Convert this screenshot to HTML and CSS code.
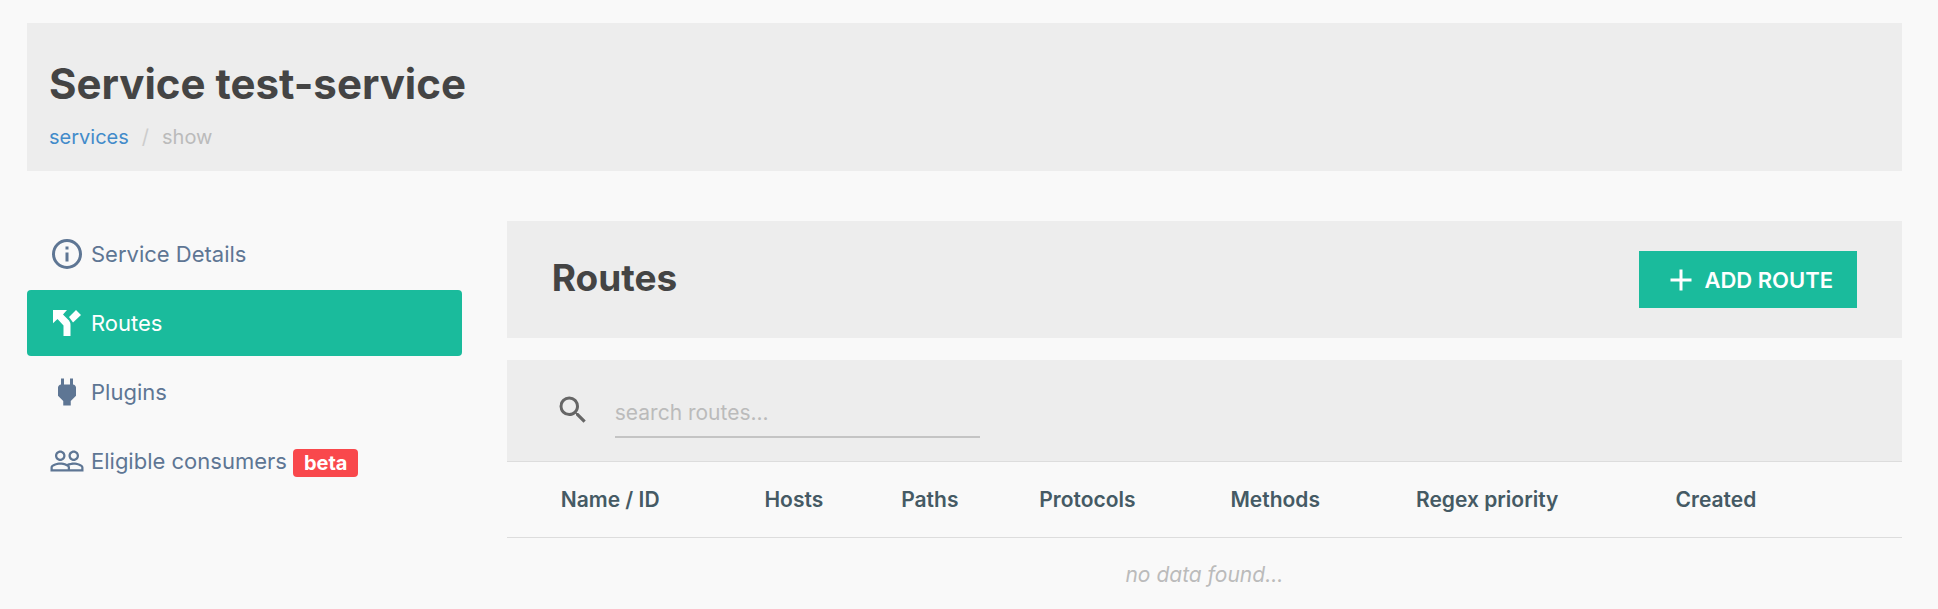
FILE: index.html
```html
<!DOCTYPE html>
<html lang="en">
<head>
<meta charset="utf-8">
<title>Service test-service</title>
<link rel="stylesheet" href="styles.css">
</head>
<body>
<header class="page-header">
  <h1 class="page-title">Service test-service</h1>
  <nav class="breadcrumb" aria-label="Breadcrumb">
    <a class="crumb-link" href="#services">services</a>
    <span class="crumb-sep">/</span>
    <span>show</span>
  </nav>
</header>
<div class="layout">
  <nav class="sidebar" aria-label="Service sections">
    <a class="side-link" href="#details">
      <svg class="icon" viewBox="0 0 24 24" aria-hidden="true"><path d="M11,9H13V7H11M12,20C7.59,20 4,16.41 4,12C4,7.59 7.59,4 12,4C16.41,4 20,7.59 20,12C20,16.41 16.41,20 12,20M12,2A10,10 0 0,0 2,12A10,10 0 0,0 12,22A10,10 0 0,0 22,12A10,10 0 0,0 12,2M11,17H13V11H11V17Z"/></svg>
      <span>Service Details</span>
    </a>
    <a class="side-link active" href="#routes" aria-current="page">
      <svg class="icon" viewBox="0 0 36 36" aria-hidden="true"><path d="M4 5H18L14 9.500L20 15.500Q21.500 17.500 21.500 20V31H14.500V20.500L8.500 14L4 18.300ZM27 5L32 10L24 17.500L20 12Z"/></svg>
      <span>Routes</span>
    </a>
    <a class="side-link" href="#plugins">
      <svg class="icon" viewBox="0 0 24 24" aria-hidden="true"><path d="M16,7V3H14V7H10V3H8V7H8C7,7 6,8 6,9V14.500L9.500,18V21H14.500V18L18,14.500V9C18,8 17,7 16,7Z"/></svg>
      <span>Plugins</span>
    </a>
    <a class="side-link" href="#consumers">
      <svg class="icon" viewBox="0 0 24 24" aria-hidden="true"><path d="M16.500 13c-1.200 0-3.070.340-4.500 1-1.430-.670-3.300-1-4.500-1C5.330 13 1 14.080 1 16.250V19h22v-2.750C23 14.080 18.670 13 16.500 13zm-4 4.500h-10v-1.250c0-.540 2.560-1.750 5-1.750s5 1.210 5 1.750v1.250zm9 0H14v-1.250c0-.460-.200-.860-.520-1.220.880-.300 1.960-.530 3.020-.530 2.440 0 5 1.210 5 1.750v1.250zM7.500 12c1.930 0 3.500-1.570 3.500-3.500S9.430 5 7.500 5 4 6.570 4 8.500 5.570 12 7.500 12zm0-5.500c1.100 0 2 .900 2 2s-.900 2-2 2-2-.900-2-2 .900-2 2-2zm9 5.500c1.930 0 3.500-1.570 3.500-3.500S18.430 5 16.500 5 13 6.570 13 8.500s1.570 3.500 3.500 3.500zm0-5.500c1.100 0 2 .900 2 2s-.900 2-2 2-2-.900-2-2 .900-2 2-2z"/></svg>
      <span>Eligible consumers</span>
      <span class="badge">beta</span>
    </a>
  </nav>
  <main class="content">
    <section class="panel-head">
      <h2 class="panel-title">Routes</h2>
      <button class="add-button" type="button">
        <svg class="icon" viewBox="0 0 24 24" aria-hidden="true"><path d="M19,13H13V19H11V13H5V11H11V5H13V11H19Z"/></svg>
        <span>ADD ROUTE</span>
      </button>
    </section>
    <section class="list">
      <form class="search">
        <label class="search-label" for="search">
          <svg class="icon" viewBox="0 0 24 24" role="img" aria-label="Search"><path d="M9.500,3A6.500,6.500 0 0,1 16,9.500C16,11.110 15.410,12.590 14.440,13.730L14.710,14H15.500L20.500,19L19,20.500L14,15.500V14.710L13.730,14.440C12.590,15.410 11.110,16 9.500,16A6.500,6.500 0 0,1 3,9.500A6.500,6.500 0 0,1 9.500,3M9.500,5C7,5 5,7 5,9.500C5,12 7,14 9.500,14C12,14 14,12 14,9.500C14,7 12,5 9.500,5Z"/></svg>
        </label>
        <input class="search-input" id="search" type="text" placeholder="search routes...">
      </form>
      <table class="routes">
        <colgroup>
          <col class="c-lead"><col class="c-name"><col class="c-hosts"><col class="c-paths"><col class="c-protocols"><col class="c-methods"><col class="c-regex"><col>
        </colgroup>
        <thead>
          <tr><td></td><th scope="col">Name / ID</th><th scope="col">Hosts</th><th scope="col">Paths</th><th scope="col">Protocols</th><th scope="col">Methods</th><th scope="col">Regex priority</th><th scope="col">Created</th></tr>
        </thead>
        <tbody>
          <tr><td class="empty" colspan="8">no data found...</td></tr>
        </tbody>
      </table>
    </section>
  </main>
</div>
</body>
</html>
```
FILE: styles.css
```css
* { box-sizing: border-box; }

body {
  margin: 0;
  padding: 23px 36px 0 27px;
  background: #f9f9f9;
  color: #444;
  font-family: Inter, "Open Sans", sans-serif;
  font-size: 21px;
  line-height: 30px;
}

h1, h2 { margin: 0; font-weight: 700; }
a { text-decoration: none; }

.icon {
  display: block;
  flex: none;
  width: 36px;
  height: 36px;
  fill: currentColor;
}

.page-header {
  padding: 34px 22px 19px;
  background: #ededed;
}
.page-title { font-size: 42px; line-height: 54px; }
.breadcrumb {
  display: flex;
  gap: 13px;
  padding-top: 11px;
  color: #bbb;
  font-size: 20px;
}
.crumb-link { color: #428bca; }
.crumb-sep { color: #ccc; }

.layout {
  display: flex;
  gap: 45px;
  margin-top: 50px;
}
.sidebar {
  display: flex;
  flex: none;
  flex-direction: column;
  gap: 3px;
  width: calc(25% - 34px);
}
.side-link {
  display: flex;
  align-items: center;
  gap: 6px;
  height: 66px;
  padding: 0 22px;
  border-radius: 4px;
  color: #5e7694;
  font-size: 22px;
}
.side-link.active { background: #1abb9c; color: #fff; }
.badge {
  margin-top: 4px;
  padding: 0 11px;
  border-radius: 4px;
  background: #f9484c;
  color: #fff;
  font-size: 20px;
  font-weight: 700;
  line-height: 28px;
}

.content { flex: 1; min-width: 0; }
.panel-head {
  display: flex;
  justify-content: space-between;
  align-items: flex-start;
  padding: 30px 45px;
  background: #ededed;
}
.panel-title { font-size: 37px; line-height: 54px; }
.add-button {
  display: flex;
  align-items: center;
  gap: 5px;
  height: 57px;
  padding: 0 24px;
  border: 0;
  background: #1abb9c;
  color: #fff;
  font: inherit;
  font-size: 22px;
  font-weight: 600;
}

.list { margin-top: 22px; }
.search {
  display: flex;
  align-items: flex-start;
  gap: 24px;
  padding: 32px 45px 23px;
  background: #ededed;
}
.search-label { padding-left: 3px; color: #666; }
.search-input {
  width: 365px;
  height: 46px;
  padding: 4px 0 8px;
  border: 0;
  border-bottom: 2px solid #c4c4c4;
  background: transparent;
  color: #444;
  font: inherit;
}
.search-input::placeholder { color: #bbb; opacity: 1; }

.routes {
  width: 100%;
  border-collapse: collapse;
  table-layout: fixed;
}
.routes thead tr {
  height: 76px;
  border-top: 1px solid #ddd;
  border-bottom: 1px solid #ddd;
}
.routes td { padding: 0; }
.routes th {
  padding: 0 0 0 10px;
  color: #455a64;
  font-weight: 600;
  text-align: left;
  white-space: nowrap;
}
.c-lead { width: 44px; }
.c-name { width: 14.6%; }
.c-hosts { width: 9.8%; }
.c-paths { width: 9.9%; }
.c-protocols { width: 13.7%; }
.c-methods { width: 13.3%; }
.c-regex { width: 18.6%; }
.routes .empty {
  padding: 22px 0 10px;
  color: #bbb;
  font-style: italic;
  text-align: center;
}
```
